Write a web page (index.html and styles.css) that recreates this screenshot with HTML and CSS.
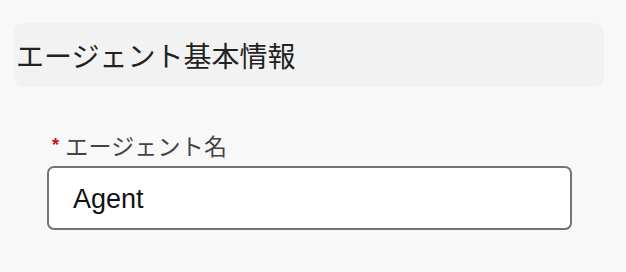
FILE: index.html
```html
<!DOCTYPE html>
<html lang="ja">
<head>
  <meta charset="UTF-8">
  <title>エージェント基本情報</title>
  <link rel="stylesheet" href="styles.css">
</head>
<body>

<section class="panel">
  <div class="panel-title">エージェント基本情報</div>

  <div class="field">
    <label class="field-label" for="agent-name"><span class="required">*</span>エージェント名</label>
    <input class="field-input" id="agent-name" type="text" value="Agent">
  </div>
</section>

</body>
</html>
```

FILE: styles.css
```css
body {
  margin: 0;
  padding: 0;
  background-color: #f8f8f8;
  font-family: "Noto Sans CJK JP", "Liberation Sans", sans-serif;
  color: #222;
}

.panel {
  padding: 23px 22px 0 14px;
}

.panel-title {
  display: flex;
  align-items: center;
  height: 64px;
  padding-left: 2px;
  background-color: #f2f2f2;
  border-radius: 9px;
  font-size: 28px;
  color: #222;
}

.field {
  margin: 44px 0 0 33px;
  width: 525px;
}

.field-label {
  display: flex;
  align-items: center;
  font-size: 23px;
  letter-spacing: 0.2px;
  line-height: 28px;
  color: #444;
}

.required {
  color: #c4161c;
  font-family: "Liberation Sans", sans-serif;
  font-weight: bold;
  font-size: 18px;
  margin: 0 6px 0 5px;
}

.field-input {
  display: block;
  box-sizing: border-box;
  width: 100%;
  height: 64px;
  margin-top: 7px;
  padding: 2px 0 0 24px;
  border: 2px solid #737373;
  border-radius: 7px;
  background-color: #fff;
  font-family: "Liberation Sans", sans-serif;
  font-size: 27px;
  color: #111;
  outline: none;
}
```
